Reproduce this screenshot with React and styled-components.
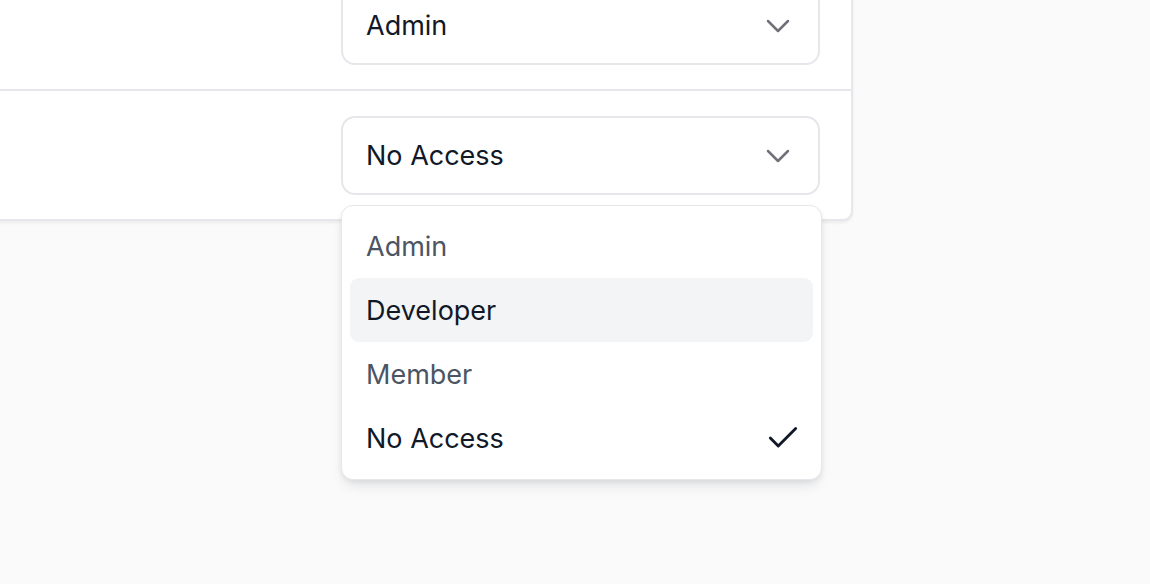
import styled, { createGlobalStyle } from 'styled-components'
import { ChevronDown, Check } from 'lucide-react'

const GlobalStyle = createGlobalStyle`
    html, body {
        margin: 0;
        padding: 0;
        background: #fafafa;
        font-family: Inter, "Noto Sans", "Liberation Sans", sans-serif;
        -webkit-font-smoothing: antialiased;
    }
`

const Page = styled.div`
    min-height: 584px;
    overflow: hidden;
`

const Card = styled.div`
    margin: -41px 0 0 -100px;
    width: 953px;
    box-sizing: border-box;
    background: #fff;
    border: 2px solid #e5e7eb;
    border-radius: 10px;
    box-shadow: 0 2px 3px rgba(15, 23, 42, 0.06);
`

const Row = styled.div`
    display: flex;
    justify-content: flex-end;
    padding: 25px 31px 24px;
    & + & {
        border-top: 2px solid #e5e7eb;
    }
`

const SelectWrap = styled.div`
    position: relative;
    width: 479px;
`

const Trigger = styled.button`
    display: flex;
    align-items: center;
    justify-content: space-between;
    width: 100%;
    height: 79px;
    box-sizing: border-box;
    padding: 0 28px 0 23px;
    background: #fff;
    border: 2px solid #e5e7eb;
    border-radius: 14px;
    font: inherit;
    font-size: 27px;
    color: #111827;
    text-align: left;
    svg {
        color: #71717a;
        margin-right: -8px;
    }
`

const Menu = styled.ul`
    position: absolute;
    top: calc(100% + 10px);
    left: 0;
    width: 481px;
    box-sizing: border-box;
    margin: 0;
    padding: 8px 8px 9px;
    list-style: none;
    background: #fff;
    border: 1px solid #e5e7eb;
    border-radius: 12px;
    box-shadow: 0 8px 14px -4px rgba(15, 23, 42, 0.12), 0 2px 5px rgba(15, 23, 42, 0.06);
    z-index: 10;
`

const Option = styled.li`
    display: flex;
    align-items: center;
    justify-content: space-between;
    height: 64px;
    padding: 0 11px 0 16px;
    border-radius: 9px;
    font-size: 27px;
    color: ${p => (p.$active || p.$selected ? '#111827' : '#4b5563')};
    background: ${p => (p.$active ? '#f3f4f6' : 'transparent')};
    svg {
        color: #111827;
    }
`

const roles = ['Admin', 'Developer', 'Member', 'No Access']

const RoleSelect = ({ value, open, active }) => (
    <SelectWrap>
        <Trigger>
            {value}
            <ChevronDown size={40} strokeWidth={1.5} />
        </Trigger>
        {open && (
            <Menu>
                {roles.map(role => (
                    <Option key={role} $active={role === active} $selected={role === value}>
                        {role}
                        {role === value && <Check size={38} strokeWidth={1.8} />}
                    </Option>
                ))}
            </Menu>
        )}
    </SelectWrap>
)

export default function App() {
    return (
        <Page>
            <GlobalStyle />
            <Card>
                <Row>
                    <RoleSelect value='Admin' />
                </Row>
                <Row>
                    <RoleSelect value='No Access' open active='Developer' />
                </Row>
            </Card>
        </Page>
    )
}
